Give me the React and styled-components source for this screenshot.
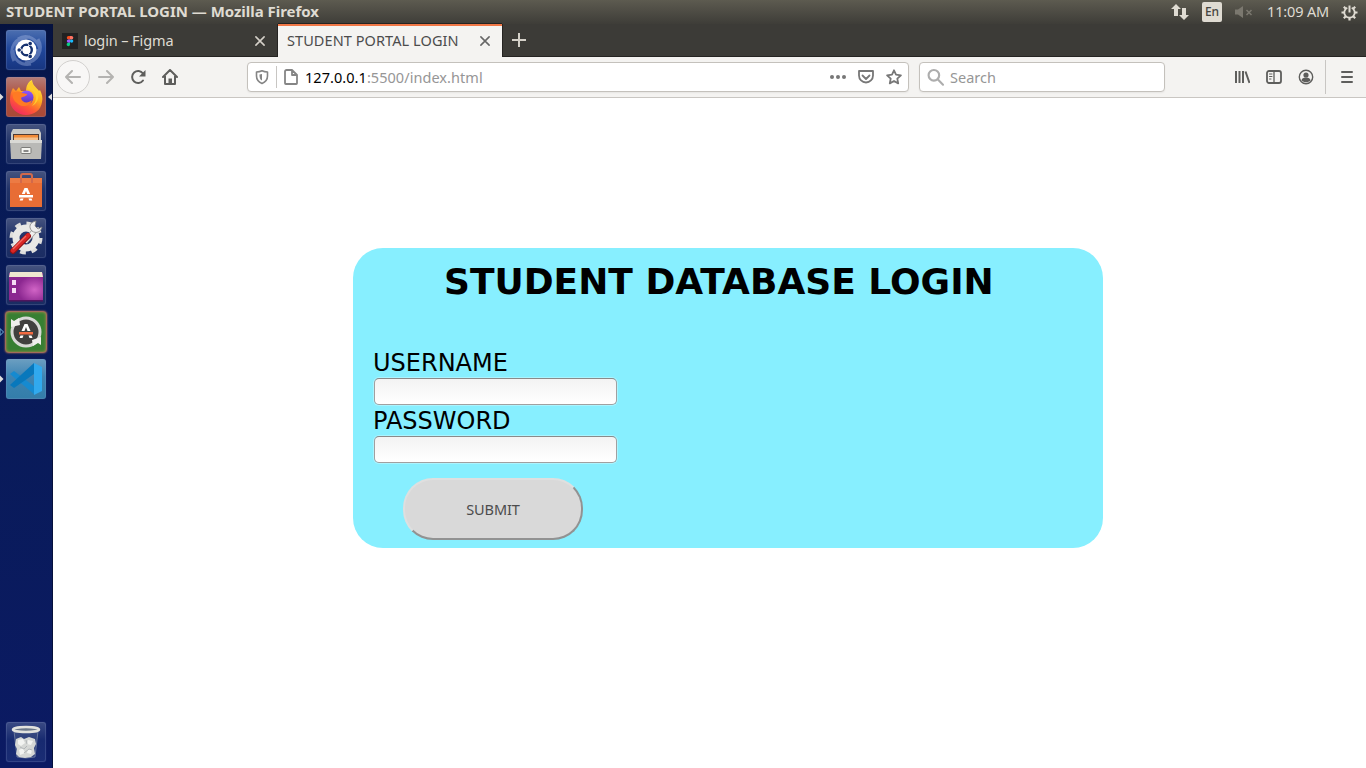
import React from "react";
import styled, { createGlobalStyle } from "styled-components";

const GlobalStyle = createGlobalStyle`
  * { box-sizing: border-box; }
  body { margin: 0; background: #fff; overflow: hidden; font-family: "Noto Sans", "Open Sans", sans-serif; }
  svg { display: block; flex: none; }
`;

const Desktop = styled.div`
  width: 1366px;
  height: 768px;
  display: flex;
  flex-direction: column;
  overflow: hidden;
`;
const TopPanel = styled.header`
  height: 24px;
  flex: none;
  display: flex;
  align-items: center;
  padding: 0 8px 0 6px;
  background: linear-gradient(#5d5b50, #55534a 25%, #3e3d38);
  color: #dfdbd2;
`;
const Label = styled.span`
  font-size: ${(p) => p.$size || 14.5}px;
  font-weight: ${(p) => (p.$bold ? 700 : 400)};
  letter-spacing: ${(p) => p.$track || 0}px;
  color: ${(p) => p.$color || "inherit"};
  padding-left: ${(p) => p.$indent || 0}px;
  padding-bottom: ${(p) => p.$lift || 0}px;
  line-height: 20px;
  white-space: nowrap;
`;
const Tray = styled.div`
  margin-left: auto;
  display: flex;
  align-items: center;
`;
const Keyboard = styled.span`
  width: 20px;
  height: 20px;
  margin: 0 13px 0 13px;
  border-radius: 2px;
  background: #dfdbd2;
  color: #45443f;
  display: grid;
  place-items: center;
  font-size: 12px;
  font-weight: 500;
  line-height: 18px;
`;
const Clock = styled.time`
  width: 63px;
  margin: 0 11px 0 14px;
  padding-bottom: 2px;
  font-size: 14.5px;
  letter-spacing: -0.15px;
  line-height: 20px;
  white-space: nowrap;
`;
const Workspace = styled.div`
  flex: 1;
  min-height: 0;
  display: flex;
`;
const Launcher = styled.nav`
  width: 53px;
  flex: none;
  display: flex;
  flex-direction: column;
  gap: 5px;
  padding: 5px 0 5px;
  background: linear-gradient(#05123f, #071a55 12%, #091b5a 55%, #0b1a63);
  border-right: 1px solid #06113c;
`;
const Slot = styled.div`
  height: 42px;
  width: 52px;
  display: flex;
  align-items: center;
  margin-top: ${(p) => (p.$last ? "auto" : "0")};
`;
const Marker = styled.svg.attrs({ width: 4, height: 8, viewBox: "0 0 4 8" })`
  transform: ${(p) => (p.$flip ? "scaleX(-1)" : "none")};
  visibility: ${(p) => (p.$shown ? "visible" : "hidden")};
`;
const Tile = styled.div`
  width: 40px;
  height: 40px;
  margin: 0 2px;
  flex: none;
  border-radius: 3px;
  background: ${(p) => p.$bg || "linear-gradient(#46547f, #22346a 45%, #1a2c62)"};
  box-shadow: ${(p) => p.$glow || "inset 0 0 0 1px rgba(140,155,200,.22), 0 0 1px rgba(150,165,210,.4)"};
  display: grid;
  place-items: center;
`;
const Browser = styled.main`
  flex: 1;
  min-width: 0;
  display: flex;
  flex-direction: column;
`;
const TabStrip = styled.div`
  height: 33px;
  flex: none;
  display: flex;
  background: #3c3b37;
  border-bottom: 1px solid #252422;
`;
const Tab = styled.div`
  width: ${(p) => p.$width}px;
  height: ${(p) => (p.$active ? 33 : 32)}px;
  display: flex;
  align-items: center;
  padding: ${(p) => (p.$active ? "0 11px 2px 9px" : "2px 12px 0 9px")};
  gap: 6px;
  color: ${(p) => (p.$active ? "#4c4c4c" : "#dfdbd2")};
  background: ${(p) => (p.$active ? "#f4f3f1" : "transparent")};
  border-top: ${(p) => (p.$active ? "2px solid #f07746" : "none")};
  box-shadow: ${(p) => (p.$active ? "-1px 0 #252422, 1px 0 #252422, 0 -1px #252422" : "none")};
  > :last-child { margin-left: auto; }
`;
const NewTab = styled.button`
  width: 34px;
  border: 0;
  padding: 0;
  background: none;
  display: grid;
  place-items: center;
`;
const Toolbar = styled.div`
  height: 41px;
  flex: none;
  display: flex;
  align-items: center;
  padding: 0 11px 0 3px;
  background: #f4f3f1;
  border-bottom: 1px solid #c9c6c2;
`;
const Back = styled.div`
  width: 34px;
  height: 34px;
  border: 1px solid #d2d0ce;
  border-radius: 50%;
  display: grid;
  place-items: center;
  background: #f8f7f6;
`;
const NavIcons = styled.div`
  display: flex;
  gap: 16px;
  margin-left: 8px;
`;
const Field = styled.div`
  width: ${(p) => p.$width}px;
  height: 30px;
  margin-left: ${(p) => p.$left}px;
  display: flex;
  align-items: center;
  border: 1px solid #c4c1bc;
  border-radius: 4px;
  background: #fff;
  box-shadow: 0 1px 2px rgba(0,0,0,.06);
  padding: 0 6px;
`;
const Divider = styled.i`
  width: 1px;
  height: ${(p) => p.$height}px;
  background: #c8c6c3;
  margin: 0 ${(p) => p.$after || p.$gap}px 0 ${(p) => p.$gap}px;
`;
const Tools = styled.div`
  display: flex;
  align-items: center;
  gap: ${(p) => p.$gap}px;
  margin-left: auto;
`;
const Page = styled.section`
  flex: 1;
  padding: 150px 0 0 300px;
  background: #fff;
`;
const Card = styled.form`
  width: 750px;
  height: 300px;
  border-radius: 30px;
  background: #87efff;
  padding: 13px 20px 0;
  color: #000;
  font-family: "DejaVu Sans", sans-serif;
`;
const Title = styled.h1`
  margin: 0 0 45px 71px;
  font-size: 36px;
  line-height: 42px;
  white-space: nowrap;
`;
const FormRow = styled.label`
  display: block;
  height: 58px;
  font-size: 24px;
  line-height: 30px;
`;
const TextInput = styled.input`
  display: block;
  width: 243px;
  height: 27px;
  margin: 0 0 0 1px;
  border: 1px solid #a0a0a0;
  border-top-color: #8a8a8a;
  border-radius: 5px;
  background: linear-gradient(#f3f3f3, #fff);
  box-shadow: 0 0 0 1px rgba(255,255,255,.3);
  outline: none;
`;
const Submit = styled.button`
  display: block;
  width: 180px;
  height: 62px;
  margin: 14px 0 0 30px;
  padding: 0;
  border: 2px solid;
  border-color: #dfdfdf #929292 #929292 #dfdfdf;
  border-radius: 30px;
  background: #d9d9d9;
  color: #4c4c4c;
  font: 14.5px "Noto Sans", sans-serif;
  letter-spacing: -0.1px;
`;

const Icon = ({ size = 16, color = "#5e5e5c", w = 2, children }) => (
  <svg width={size} height={size} viewBox="0 0 16 16" fill="none" stroke={color} strokeWidth={w} strokeLinecap="round" strokeLinejoin="round">{children}</svg>
);
const Close = ({ color }) => <Icon size={12} color={color} w={2.1}><path d="M2.5 2.5l11 11M13.5 2.5l-11 11" /></Icon>;

const UbuntuArt = () => (
  <svg width="40" height="40" viewBox="0 0 40 40" fill="none">
    <path d="M8 31C2 18 9 6 24 7c-9 0-14 6-14 13M32 9c6 11 0 23-13 24 8-1 13-6 13-14M12 9c9-6 20 0 22 11M7 20c0 10 8 16 18 14" stroke="#b9c8ed" strokeOpacity=".35" strokeWidth="3" />
    <circle cx="20" cy="20" r="10.5" fill="#fff" />
    <circle cx="20.5" cy="20" r="5.2" stroke="#16316f" strokeWidth="2.6" />
    <path d="M20.5 20H12M20.5 20l4.5-8M20.5 20l4.5 8" stroke="#fff" strokeWidth="1" />
    <circle cx="20.5" cy="20" r="3.9" fill="#fff" />
    <circle cx="13.2" cy="20" r="2.4" fill="#fff" /><circle cx="24.2" cy="13.6" r="2.4" fill="#fff" /><circle cx="24.2" cy="26.4" r="2.4" fill="#fff" />
    <circle cx="13.2" cy="20" r="1.8" fill="#16316f" /><circle cx="24.2" cy="13.6" r="1.8" fill="#16316f" /><circle cx="24.2" cy="26.4" r="1.8" fill="#16316f" />
  </svg>
);
const FirefoxArt = () => (
  <svg width="40" height="40" viewBox="0 0 40 40">
    <defs>
      <linearGradient id="fox" x1=".8" y1="0" x2=".25" y2="1"><stop stopColor="#fff04a" /><stop offset=".4" stopColor="#ffb01e" /><stop offset=".7" stopColor="#ff5934" /><stop offset="1" stopColor="#ef2665" /></linearGradient>
      <linearGradient id="globe" x1="0" y1="0" x2="0" y2="1"><stop stopColor="#9059ff" /><stop offset="1" stopColor="#5630b8" /></linearGradient>
    </defs>
    <path d="M7 11l3 3 3-4 2 4h5c0-5 2-9 6-11 0 5 5 8 7 11l1-1c2 4 3 8 2 12-1 8-8 13-16 13C11 38 4 31 4 23c0-5 1-9 3-12z" fill="url(#fox)" />
    <circle cx="20.5" cy="20.5" r="7" fill="url(#globe)" />
    <path d="M7 16c3-2 7-2 9 0l5 1c0 3-5 2-6 4 1 5 7 6 11 2-1 6-10 8-14 4-4-3-6-6-5-11z" fill="#ff7a24" />
    <path d="M22 12c5 1 8 4 8 9 0 3-2 6-4 8 6-3 9-11 4-17-2-3-4-5-4-8-4 2-5 5-4 8z" fill="#ffcb2d" />
  </svg>
);
const FilesArt = () => (
  <svg width="40" height="40" viewBox="0 0 40 40">
    <path d="M7 5h26l2 4v10H5V9z" fill="#c9c9c6" /><path d="M7 10h26v7H7z" fill="#503c35" />
    <path d="M8 11h24v3H8z" fill="#f28b38" /><path d="M8 13.5h24V16H8z" fill="#f3c18e" />
    <path d="M4 16h32l-1 19H5z" fill="#b9b9b6" /><path d="M4 16h32v3H4z" fill="#d9d9d5" />
    <rect x="15" y="23.5" width="10" height="6" rx="1" fill="#f4f4f0" stroke="#7c7c79" /><path d="M17.5 27h5" stroke="#666" strokeWidth="1.500" />
  </svg>
);
const SoftwareArt = () => (
  <svg width="40" height="40" viewBox="0 0 40 40">
    <path d="M4 7h32v29H4z" fill="#e86d35" /><path d="M4 7h32v5H4z" fill="#f39460" opacity=".35" />
    <path d="M15 12V5q0-2 2-2h7q2 0 2 2v7" fill="none" stroke="#d2694b" strokeWidth="2" />
    <path d="M18.5 17h3l2.700 6H21.200L20 20l-1.200 3h-3zM13 24h14v2.500H13zM14.500 27.500h3l-.8 2h-3zM22.500 27.500h3l.8 2h-3z" fill="#fff" />
  </svg>
);
const SettingsArt = () => (
  <svg width="40" height="40" viewBox="0 0 40 40" fill="none">
    <circle cx="20" cy="20" r="14" stroke="#dededc" strokeWidth="5" strokeDasharray="5.5 5.5" /><circle cx="20" cy="20" r="10" stroke="#e8e8e6" strokeWidth="7" />
    <path d="M19 24L30 11" stroke="#9a9a98" strokeWidth="5.5" /><path d="M19 24L30 11" stroke="#f0f0ee" strokeWidth="4" />
    <path d="M30 3c-6 1-8 6-4 10 4 3 9 1 10-4l-4 2-3-3z" fill="#eee" stroke="#828282" strokeWidth=".8" />
    <path d="M7 33l15-15" stroke="#901315" strokeWidth="6" strokeLinecap="round" /><path d="M7 32.5l15-15" stroke="#d92625" strokeWidth="4.5" strokeLinecap="round" /><path d="M7 31l13-13" stroke="#f16b61" strokeWidth="1.3" />
  </svg>
);
const WindowArt = () => (
  <svg width="40" height="40" viewBox="0 0 40 40">
    <defs><radialGradient id="wall" cx=".75" cy=".6"><stop stopColor="#d164c6" /><stop offset="1" stopColor="#8b2790" /></radialGradient></defs>
    <path d="M3 8h34v28H3z" fill="url(#wall)" /><path d="M4 7h32l1 5H3z" fill="#eee8d0" /><path d="M6 15h4v5H6zM6 23h4v5H6z" fill="#f4ddf4" /><path d="M3 35h34v1.5H3z" fill="#4f155d" />
  </svg>
);
const UpdaterArt = () => (
  <svg width="40" height="40" viewBox="0 0 40 40" fill="none">
    <circle cx="20" cy="20" r="14" fill="#41403f" stroke="#d7d8d5" strokeWidth="3" /><path d="M5 15V7l3 2 5-3 1 7zM35 25v8l-3-2-5 3-1-6z" fill="#efefed" />
    <path d="M18.5 12h3l3 7h-3L20 15l-1.500 4h-3zM14.500 23.500h3l-1 2.500h-3zM22.500 23.500h3l1 2.500h-3z" fill="#fff" /><path d="M13 20h14v2.500H13z" fill="#f46b42" />
  </svg>
);
const CodeArt = () => (
  <svg width="40" height="40" viewBox="0 0 40 40">
    <path d="M4 15l4-3 21 16v8z" fill="#168ad0" /><path d="M4 26L28 4v11L8 29z" fill="#0878bc" /><path d="M28 4l8 4v24l-8 4z" fill="#31a9ee" />
  </svg>
);
const TrashArt = () => (
  <svg width="40" height="40" viewBox="0 0 40 40">
    <path d="M8 9l3 26q9 2 18 0l3-26z" fill="#8291a7" fillOpacity=".2" stroke="#a6b0bd" strokeOpacity=".5" />
    <path d="M10 17l5-2 3 2 5-2 6 2 1 5-2 4 1 6-4 3-6 1-6-1-3-3 1-5-2-4z" fill="#d5d7d5" />
    <path d="M12 18l5-1 2 4-4 3-3-2zM22 18l5 1-2 4-4-1zM13 28l4-2 2 5-5 2zM22 27l4 1-1 4-4-1z" fill="#f2f3f1" />
    <path d="M14 25l4 2 3-3M18 31l5-4 3 1M20 18l1 4" stroke="#b2b6b8" fill="none" />
    <ellipse cx="20" cy="7.5" rx="13" ry="2.6" fill="#6b7789" stroke="#e2e2de" strokeWidth="2.5" />
  </svg>
);

const apps = [
  { art: UbuntuArt, bg: "linear-gradient(#4c6fb0,#21489c 45%,#173580)" },
  { art: FirefoxArt, bg: "linear-gradient(#b57d78,#ad5140 45%,#a94936)", running: true, focused: true },
  { art: FilesArt },
  { art: SoftwareArt },
  { art: SettingsArt },
  { art: WindowArt },
  { art: UpdaterArt, bg: "#377f32", glow: "0 0 2px 1px #d98a5a, inset 0 0 3px #b98853", outline: true },
  { art: CodeArt, bg: "linear-gradient(#6c9fc1,#3d84b3 45%,#337da9)", running: true },
  { art: TrashArt, bg: "linear-gradient(#3b4b84,#172a70 45%,#1a2c74)", last: true },
];

function Dock() {
  return (
    <Launcher>
      {apps.map(({ art: Art, ...a }, i) => (
        <Slot key={i} $last={a.last}>
          <Marker $shown={a.running || a.outline}><path d="M0 .5L3.5 4 0 7.5z" fill={a.outline ? "none" : "#ddd"} stroke={a.outline ? "#72b8dd" : "none"} /></Marker>
          <Tile $bg={a.bg} $glow={a.glow}><Art /></Tile>
          <Marker $flip $shown={a.focused}><path d="M0 .5L4 4 0 7.5z" fill="#ddd" /></Marker>
        </Slot>
      ))}
    </Launcher>
  );
}

const TrayIcons = () => (
  <Tray>
    <svg width="18" height="18" viewBox="0 0 18 18" fill="#dfdbd2"><path d="M5 1l5 5H7v7H3V6H0zM11 5h4v7h3l-5 5-5-5h3z" /></svg>
    <Keyboard>En</Keyboard>
    <svg width="18" height="14" viewBox="0 0 18 14" fill="#7b786f"><path d="M0 4.5h3L8 1v12L3 9.5H0z" /><path d="M11.5 5l5 5M16.5 5l-5 5" stroke="#7b786f" strokeWidth="1.5" /></svg>
    <Clock>11:09 AM</Clock>
    <svg width="17" height="17" viewBox="0 0 17 17" fill="none" stroke="#dfdbd2">
      <path d="M6.3 3.8a5.2 5.2 0 1 0 4.4 0" strokeWidth="1.8" /><path d="M8.5 1.5v7" strokeWidth="2" />
      <path d="M.5 8.5h3M13.5 8.5h3M2.8 2.8l2 2M14.2 2.8l-2 2M2.8 14.2l2-2M14.2 14.2l-2-2M8.5 13.5v3" strokeWidth="2.2" />
    </svg>
  </Tray>
);

export default function App() {
  return (
    <Desktop>
      <GlobalStyle />
      <TopPanel><Label $bold $size={15} $track={-0.03} $lift={2}>STUDENT PORTAL LOGIN — Mozilla Firefox</Label><TrayIcons /></TopPanel>
      <Workspace>
        <Dock />
        <Browser>
          <TabStrip>
            <Tab $width={225}>
              <svg width="16" height="16" viewBox="0 0 16 16"><path fill="#222" d="M0 0h16v16H0z" /><path fill="#f24e1e" d="M8 3H6.5a1.7 1.7 0 0 0 0 3.4H8z" /><path fill="#ff7262" d="M8 3h1.6a1.7 1.7 0 0 1 0 3.4H8z" /><path fill="#a259ff" d="M8 6.4H6.5a1.7 1.7 0 0 0 0 3.4H8z" /><circle fill="#1abcfe" cx="9.6" cy="8.1" r="1.7" /><path fill="#0acf83" d="M8 9.8H6.5A1.7 1.7 0 1 0 8 11.5z" /></svg>
              <Label $track={-0.1} $lift={2}>login – Figma</Label><Close color="#d5d1c9" />
            </Tab>
            <Tab $width={224} $active><Label $track={0.08} $lift={2}>STUDENT PORTAL LOGIN</Label><Close color="#666" /></Tab>
            <NewTab><svg width="14" height="14" viewBox="0 0 14 14"><path d="M7 0v14M0 7h14" stroke="#d5d1c9" strokeWidth="2" /></svg></NewTab>
          </TabStrip>
          <Toolbar>
            <Back><Icon color="#b4b3b1"><path d="M15 8H1M7 2L1 8l6 6" /></Icon></Back>
            <NavIcons>
              <Icon color="#b4b3b1"><path d="M1 8h14M9 2l6 6-6 6" /></Icon>
              <Icon><path d="M13 11.5A6 6 0 1 1 13 4.5" /><path d="M15.5 1v6.5H9z" fill="#5e5e5c" stroke="none" /></Icon>
              <Icon><path d="M1 8l7-7 7 7M3 7v8h10V7" /><path d="M6.5 9.5h3.5V14H6.500z" fill="#5e5e5c" stroke="none" /></Icon>
            </NavIcons>
            <Field $width={662} $left={69}>
              <Icon color="#858585" w={1.6}><path d="M8 1.800C6 2.800 4.400 3 2.500 3v4c0 3.500 2 6 5.500 7.500C11.500 13 13.500 10.500 13.500 7V3C11.600 3 10 2.800 8 1.800z" /><path d="M8 5v6.500C6 10.500 5.500 9 5.500 5.500z" fill="#858585" stroke="none" /></Icon>
              <Divider $height={22} $gap={6} />
              <Icon color="#858585" w={1.8}><path d="M4 1h5l5 5v8.200a.8.8 0 0 1-.8.8H2.800a.8.8 0 0 1-.8-.8V2.500A1.500 1.500 0 0 1 3.500 1zM9 1v5h5" /></Icon>
              <Label $indent={6} $track={0.05}>127.0.0.1<Label $color="#969696" $track={0.05}>:5500/index.html</Label></Label>
              <Tools $gap={12}>
                <svg width="16" height="16" fill="#777"><circle cx="2" cy="8" r="2" /><circle cx="8" cy="8" r="2" /><circle cx="14" cy="8" r="2" /></svg>
                <Icon color="#777" w={1.8}><path d="M1 2h14v4.500a7 7 0 0 1-14 0zM4.500 6.500L8 10l3.500-3.500" /></Icon>
                <Icon color="#777" w={1.8}><path d="M8 1.300l2 4.400 4.900.6-3.600 3.300.9 4.800L8 12l-4.200 2.400.9-4.800L1.100 6.300 6 5.700z" /></Icon>
              </Tools>
            </Field>
            <Field $width={246} $left={10}>
              <Icon size={18} color="#adadad" w={1.9}><circle cx="7" cy="6.5" r="4.7" /><path d="M10.600 10.300l4.500 4.500" /></Icon>
              <Label $color="#969696" $indent={6}>Search</Label>
            </Field>
            <Tools $gap={16}>
              <Icon><path d="M2 2v12M5.500 2v12M9 2v12M11.500 2.500l4 11.500" strokeLinecap="butt" /></Icon>
              <Icon w={1.8}><rect x="1" y="2" width="14" height="12" rx="2" /><path d="M8 2v12" strokeWidth="1.3" /><path d="M3.5 5H6M3.5 7.5H6M3.5 10H5" strokeWidth="1" /></Icon>
              <Icon w={1.4}><circle cx="8" cy="8" r="6.7" /><circle cx="8" cy="6" r="2.6" fill="#5e5e5c" stroke="none" /><path d="M3.500 11.500c0-1.800 2-3 4.500-3s4.500 1.200 4.500 3c-2.400 2.400-6.500 2.400-9 0z" fill="#5e5e5c" stroke="none" /></Icon>
            </Tools>
            <Divider $height={34} $gap={11} $after={13} />
            <Icon><path d="M3 3h10M3 8h10M3 13h10" /></Icon>
          </Toolbar>
          <Page>
            <Card onSubmit={(e) => e.preventDefault()}>
              <Title>STUDENT DATABASE LOGIN</Title>
              <FormRow>USERNAME<TextInput type="text" /></FormRow>
              <FormRow>PASSWORD<TextInput type="password" /></FormRow>
              <Submit>SUBMIT</Submit>
            </Card>
          </Page>
        </Browser>
      </Workspace>
    </Desktop>
  );
}
